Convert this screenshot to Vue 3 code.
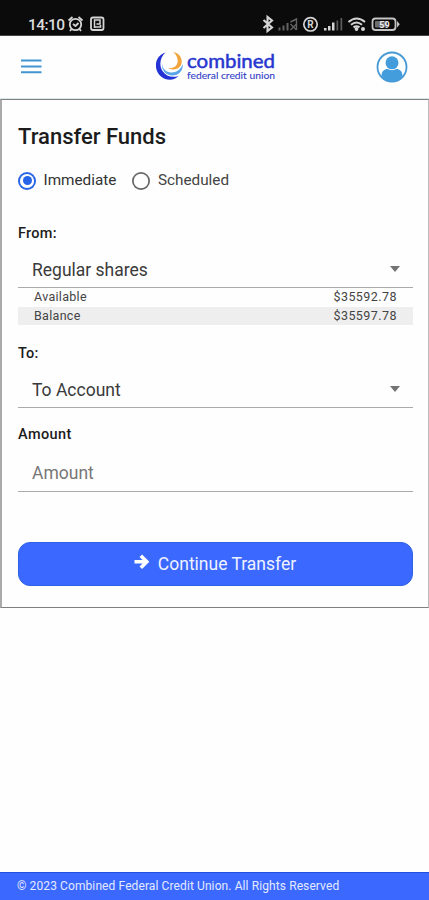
<script setup>
import { ref } from 'vue'

const mode = ref('immediate')
const balances = [
  { label: 'Available', value: '$35592.78' },
  { label: 'Balance', value: '$35597.78' },
]
</script>

<template>
  <div class="screen">
    <div class="status">
      <svg width="429" height="35" viewBox="0 0 429 35">
        <text class="clock" x="28" y="29.5" textLength="37">14:10</text>
        <g fill="none" stroke="#d4d4d4" stroke-width="1.8">
          <circle cx="75.500" cy="24.500" r="5.700" />
          <path d="M68.500 20.500l4-3.500M82.500 20.500l-4-3.500M73 24l2.500 2 3-3M71.500 29l-1.500 2M79.500 29l1.500 2" />
          <rect x="91" y="17.500" width="12.500" height="12.500" rx="2" />
          <path d="M94.500 28v-8h5.500v4h-3.500M94 27h6.500v-2" stroke-width="1.500" />
          <path d="M263.500 20l8.500 7.500-4.500 3.500V17l4.500 3.500-8.500 7.500" stroke-width="2.100" />
        </g>
        <g fill="#636363">
          <rect x="278.500" y="27.500" width="2" height="3" />
          <rect x="282.500" y="25.500" width="2" height="5" />
          <rect x="286.500" y="23" width="2" height="7.500" />
          <path d="M290.500 24l6 6M296.500 24l-6 6M290.500 22l6-3v11" fill="none" stroke="#636363" stroke-width="1.400" />
        </g>
        <circle cx="310.500" cy="24.300" r="6.700" fill="none" stroke="#d4d4d4" stroke-width="1.700" />
        <text class="tiny" x="310.500" y="28" text-anchor="middle">R</text>
        <g fill="#d4d4d4">
          <rect x="324" y="28" width="2.500" height="2.500" />
          <rect x="328" y="26" width="2.500" height="4.500" />
          <rect x="332" y="22.500" width="2.500" height="8" />
          <rect x="336.500" y="20.500" width="1.700" height="10" fill="#5c5c5c" />
          <rect x="340.500" y="18" width="1.700" height="12.500" fill="#5c5c5c" />
          <circle cx="356.500" cy="29" r="1.900" />
          <circle cx="363" cy="29" r="2" />
        </g>
        <path d="M348.500 22q8-7 16.500 0M351 24.800q5.500-4.500 11 0M353.500 27.400q3-2.300 6 0" fill="none" stroke="#d4d4d4" stroke-width="2" />
        <rect x="372.500" y="18.500" width="23" height="11.500" rx="3" fill="none" stroke="#c4c4c4" stroke-width="1.800" />
        <rect x="375" y="21" width="12" height="6.500" rx="1" fill="#6d6d6d" />
        <path d="M397 21l2.800 3.200L397 27.500z" fill="#c4c4c4" />
        <text class="charge" x="384.500" y="27.500" text-anchor="middle">59</text>
      </svg>
    </div>

    <header class="header">
      <svg class="menu" width="21" height="15" viewBox="0 0 21 15">
        <path d="M0 1.500h20.500M0 7.500h20.500M0 13.200h20.500" stroke="#4296d0" stroke-width="1.900" />
      </svg>
      <svg class="logo" width="122" height="42" viewBox="0 -6 122 42">
        <path d="M9.500 2.500C-1 5.500-3.500 19 5 26.500c6 5 14 3.500 17.500-.5-6 2-12.500.5-16-5C2.500 14.500 4.500 7 9.500 2.500z" fill="#2433d6" />
        <path d="M6 13c0 5.500 4 9.500 9.500 9.500 5 0 9.500-3.500 11.500-8.500 0 7-4.500 11.500-10.500 11.500C10 25.500 5 20 6 13z" fill="#5aa5e8" />
        <path d="M17 2c8 1 11 10 7 14.500-2.500 3-8 4-11.500 1.500 5 .5 8-1.500 9-5 1-4-1-8.500-4.500-11z" fill="#f2a33a" />
        <text class="brand" x="31" y="18.100" textLength="88" lengthAdjust="spacingAndGlyphs">combined</text>
        <text class="subbrand" x="31" y="29.300" textLength="88" lengthAdjust="spacingAndGlyphs">federal credit union</text>
      </svg>
      <svg class="user" width="32" height="32" viewBox="0 0 32 32">
        <circle cx="16" cy="16" r="14.500" fill="#fff" stroke="#4699d4" stroke-width="1.800" />
        <circle cx="16" cy="11.800" r="6.500" fill="#439ddd" />
        <path d="M5.500 25c0-5 3-7 6-7 2.500 1.500 6.500 1.500 9 0 3 0 6 2 6 7-5.500 7-15.500 7-21 0z" fill="#439ddd" />
      </svg>
    </header>

    <main class="card">
      <h1><span>Transfer Funds</span></h1>
      <div class="modes">
        <label :class="{ chosen: mode === 'immediate' }" @click="mode = 'immediate'"><i class="radio"></i><span>Immediate</span></label>
        <label :class="{ chosen: mode === 'scheduled' }" @click="mode = 'scheduled'"><i class="radio"></i><span>Scheduled</span></label>
      </div>
      <div class="caption from">From:</div>
      <div class="field"><span>Regular shares</span><i class="caret"></i></div>
      <div v-for="row in balances" :key="row.label" class="balance">
        <span>{{ row.label }}</span><span class="money">{{ row.value }}</span>
      </div>
      <div class="caption to">To:</div>
      <div class="field"><span>To Account</span><i class="caret"></i></div>
      <div class="caption amount">Amount</div>
      <div class="field entry"><span>Amount</span></div>
      <button class="submit">
        <svg width="16" height="16" viewBox="0 0 16 16"><path d="M.5 7.800h12M6.800 1.800l6 6-6 6" fill="none" stroke="#fff" stroke-width="3.600" /></svg>
        <span>Continue Transfer</span>
      </button>
    </main>

    <footer class="footer"><span>© 2023 Combined Federal Credit Union. All Rights Reserved</span></footer>
  </div>
</template>

<style>
body { margin: 0; background: #fff; }
</style>

<style scoped>
.screen {
  display: flex;
  flex-direction: column;
  width: 429px;
  height: 900px;
  background: #fefefe;
  color: #1c1c1c;
  font-family: Roboto, sans-serif;
  overflow: hidden;
}
.screen * { box-sizing: border-box; }
.screen span { white-space: nowrap; }
.status { height: 36px; background: #0b0b0b; border-bottom: 1px solid #444; flex: none; }
.status svg { display: block; }
.clock { font: 500 15.500px Roboto, sans-serif; fill: #dcdcdc; }
.tiny { font: 700 10px Roboto, sans-serif; fill: #d4d4d4; }
.charge { font: 700 9px Roboto, sans-serif; fill: #eee; }
.header {
  display: flex;
  justify-content: space-between;
  height: 63px;
  padding: 0 21px;
  flex: none;
  border-bottom: 1px solid #dce7ec;
}
.menu { margin-top: 23px; }
.logo { margin: 8px 0 0 16px; }
.user { margin-top: 15px; }
.brand { font: 400 20px Lato, sans-serif; fill: #2636cf; stroke: #2636cf; stroke-width: .5px; }
.subbrand { font: 400 9px Lato, sans-serif; fill: #3342c8; stroke: #3342c8; stroke-width: .1px; }
.card {
  height: 509px;
  padding: 0 15px 0 16px;
  border: 1px solid #808080;
  border-left: 2px solid #aaa;
  border-right-color: #bbb;
  flex: none;
}
h1 { margin: 24px 0 0; font-size: 22px; line-height: 26px; font-weight: 500; }
.modes { display: flex; gap: 16px; margin-top: 18px; height: 24px; }
.modes label { display: flex; align-items: center; gap: 7.500px; font-size: 15.300px; line-height: 24px; color: #444; }
.radio {
  display: flex;
  align-items: center;
  justify-content: center;
  width: 18px;
  height: 18px;
  margin-top: 1px;
  box-shadow: inset 0 0 0 1.700px #666;
  border-radius: 50%;
}
.chosen .radio { box-shadow: inset 0 0 0 1.900px #2864e8; }
.chosen .radio::after { content: ""; width: 9px; height: 9px; border-radius: 50%; background: #2864e8; }
.modes label.chosen { color: #333; }
.caption { height: 20px; font-size: 14.500px; line-height: 20px; font-weight: 500; }
.from { margin-top: 32px; letter-spacing: .3px; }
.to { margin-top: 18px; letter-spacing: .2px; }
.amount { margin-top: 17px; letter-spacing: .4px; }
.field {
  display: flex;
  align-items: center;
  justify-content: space-between;
  height: 44px;
  padding: 8px 13px 0 14px;
  border-bottom: 1px solid #aaa;
  font-size: 17.500px;
  line-height: 24px;
  color: #3a3a3a;
}
.to { margin-top: 19px; }
.entry { height: 47px; padding-top: 10px; color: #777; }
.caret { border: 5px solid transparent; border-top: 6px solid #747474; border-bottom: 0; margin-bottom: 1px; }
.balance {
  display: flex;
  justify-content: space-between;
  height: 19px;
  padding: 0 16px;
  font-size: 12.500px;
  line-height: 18px;
  letter-spacing: .3px;
  color: #444;
}
.money { letter-spacing: .45px; }
.balance + .balance { height: 18px; background: #eee; }
.submit {
  display: flex;
  justify-content: center;
  gap: 8px;
  width: 395px;
  height: 44px;
  margin-top: 50px;
  padding: 0 1px 0 0;
  border: 1px solid #2e62e5;
  border-radius: 12px;
  background: #3b68ff;
  color: #eff3ff;
  font: 400 17.500px/42px Roboto, sans-serif;
}
.submit svg { margin-top: 11px; }
.footer {
  height: 28px;
  margin-top: auto;
  padding-left: 17px;
  border-top: 1px solid #2052df;
  background: #3b68ff;
  color: #e3eaff;
  font-size: 12px;
  line-height: 26px;
  letter-spacing: .1px;
}
</style>
